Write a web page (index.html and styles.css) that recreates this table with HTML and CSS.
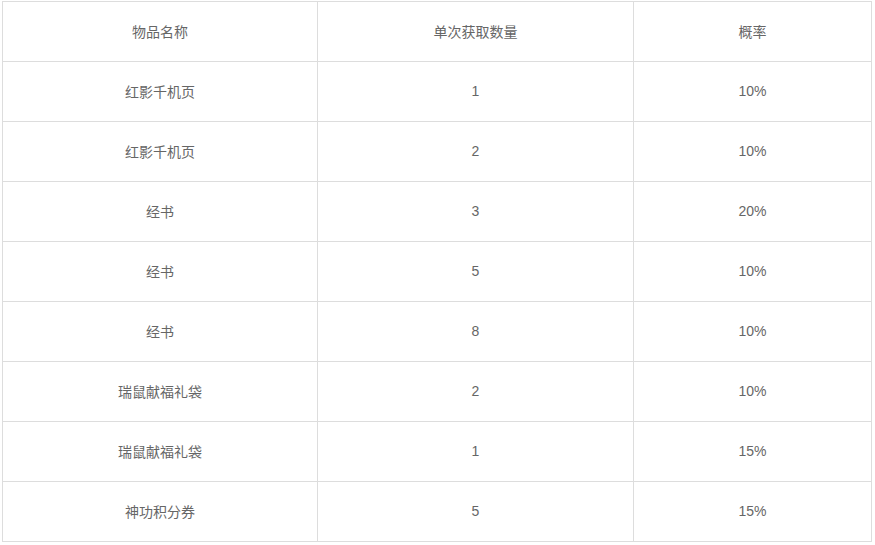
FILE: index.html
```html
<!DOCTYPE html>
<html>
<head>
<meta charset="utf-8">
<link rel="stylesheet" href="styles.css">
</head>
<body>
<table class="tbl">
  <colgroup><col class="c1"><col class="c2"><col class="c3"></colgroup>
  <tr><td>物品名称</td><td>单次获取数量</td><td>概率</td></tr>
  <tr><td>红影千机页</td><td>1</td><td>10%</td></tr>
  <tr><td>红影千机页</td><td>2</td><td>10%</td></tr>
  <tr><td>经书</td><td>3</td><td>20%</td></tr>
  <tr><td>经书</td><td>5</td><td>10%</td></tr>
  <tr><td>经书</td><td>8</td><td>10%</td></tr>
  <tr><td>瑞鼠献福礼袋</td><td>2</td><td>10%</td></tr>
  <tr><td>瑞鼠献福礼袋</td><td>1</td><td>15%</td></tr>
  <tr><td>神功积分券</td><td>5</td><td>15%</td></tr>
</table>
</body>
</html>
```
FILE: styles.css
```css
html, body {
  margin: 0;
  background: #fff;
}
body {
  padding: 1px 0 0 2px;
  font-family: "Liberation Sans", "Noto Sans CJK SC", sans-serif;
  font-size: 14px;
  color: #666;
}
.tbl {
  border-collapse: collapse;
  table-layout: fixed;
  width: 870px;
}
.c1 { width: 315px; }
.c2 { width: 316px; }
.c3 { width: 238px; }
.tbl td {
  border: 1px solid #ddd;
  height: 57px;
  padding: 0 0 2px;
  text-align: center;
  vertical-align: middle;
}
```
